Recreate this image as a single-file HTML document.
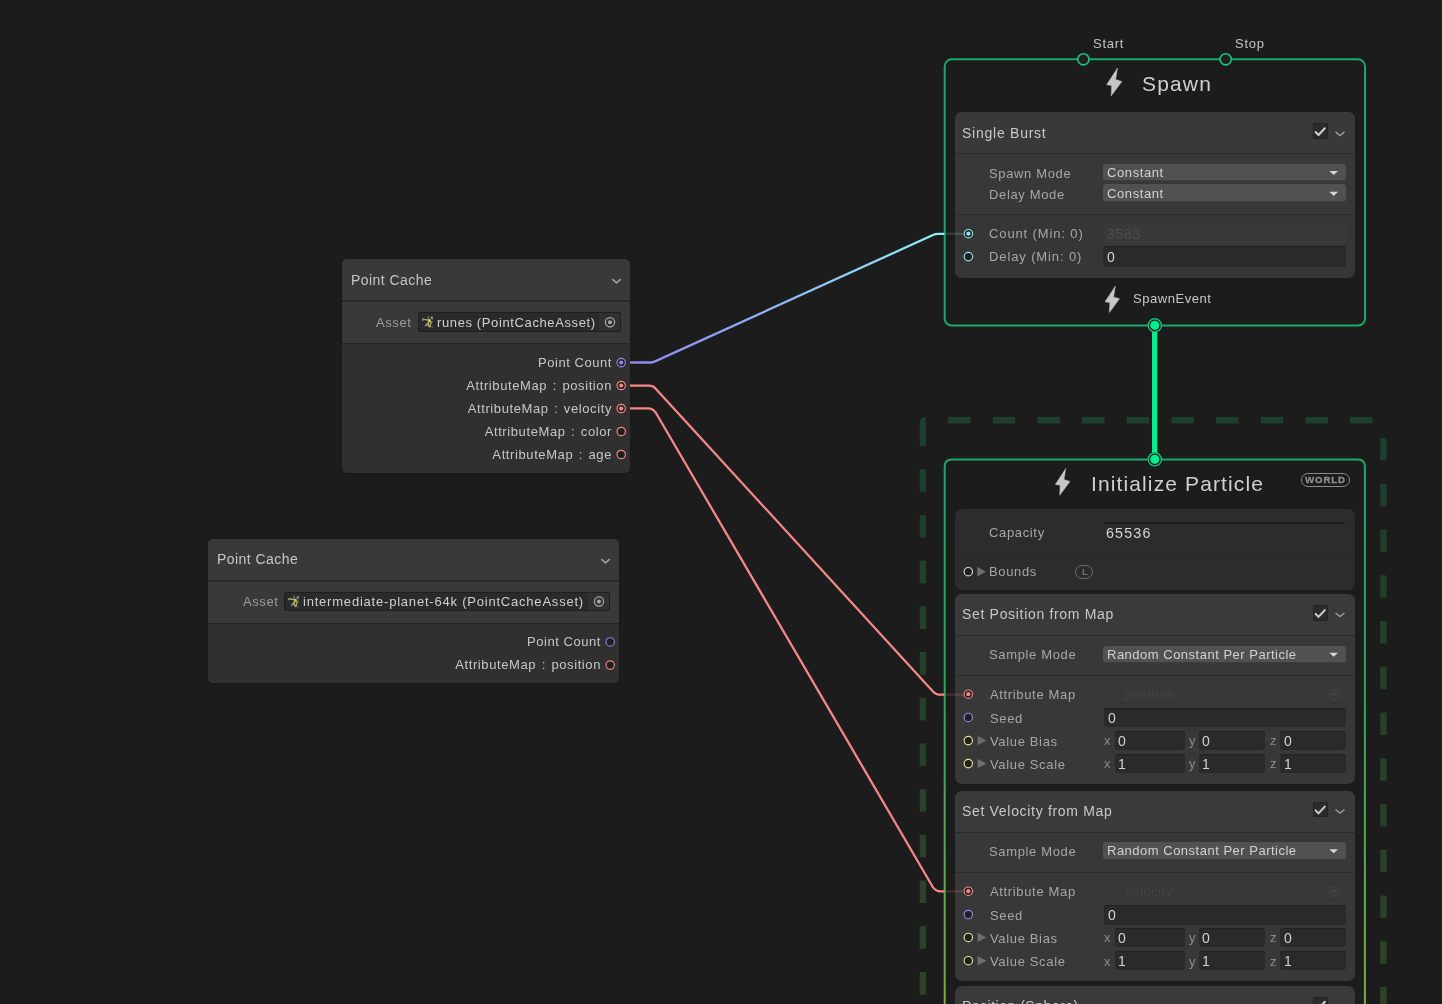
<!DOCTYPE html>
<html><head><meta charset="utf-8"><style>
html,body{margin:0;padding:0;width:1442px;height:1004px;overflow:hidden;background:#1c1c1c;}
.t{position:absolute;white-space:pre;font-family:"Liberation Sans", sans-serif;will-change:transform;}
.r{position:absolute;box-sizing:border-box;}
svg{position:absolute;left:0;top:0;}
</style></head><body>
<svg width="1442" height="1004" viewBox="0 0 1442 1004"><rect x="948.10" y="417" width="22.5" height="6.5" fill="#1d3f2d"/><rect x="992.76" y="417" width="22.5" height="6.5" fill="#1d3f2d"/><rect x="1037.42" y="417" width="22.5" height="6.5" fill="#1d3f2d"/><rect x="1082.08" y="417" width="22.5" height="6.5" fill="#1d3f2d"/><rect x="1126.74" y="417" width="22.5" height="6.5" fill="#1d3f2d"/><rect x="1171.40" y="417" width="22.5" height="6.5" fill="#1d3f2d"/><rect x="1216.06" y="417" width="22.5" height="6.5" fill="#1d3f2d"/><rect x="1260.72" y="417" width="22.5" height="6.5" fill="#1d3f2d"/><rect x="1305.38" y="417" width="22.5" height="6.5" fill="#1d3f2d"/><rect x="1350.04" y="417" width="22.5" height="6.5" fill="#1d3f2d"/><path d="M919.7,445.8 V423 Q919.7,417 925.9,417 V445.8 Z" fill="#1d3f2d"/><rect x="919.7" y="469.30" width="6.3" height="22.6" fill="#1d3f2d"/><rect x="919.7" y="514.99" width="6.3" height="22.6" fill="#1f3f2d"/><rect x="919.7" y="560.68" width="6.3" height="22.6" fill="#20402c"/><rect x="919.7" y="606.37" width="6.3" height="22.6" fill="#22402c"/><rect x="919.7" y="652.06" width="6.3" height="22.6" fill="#23402c"/><rect x="919.7" y="697.75" width="6.3" height="22.6" fill="#25402b"/><rect x="919.7" y="743.44" width="6.3" height="22.6" fill="#26412b"/><rect x="919.7" y="789.13" width="6.3" height="22.6" fill="#28412b"/><rect x="919.7" y="834.82" width="6.3" height="22.6" fill="#29412a"/><rect x="919.7" y="880.51" width="6.3" height="22.6" fill="#2b412a"/><rect x="919.7" y="926.20" width="6.3" height="22.6" fill="#2c422a"/><rect x="919.7" y="971.89" width="6.3" height="22.6" fill="#2e4229"/><rect x="1380.2" y="438.10" width="6.4" height="22.4" fill="#1d3f2d"/><rect x="1380.2" y="483.84" width="6.4" height="22.4" fill="#1e3f2d"/><rect x="1380.2" y="529.58" width="6.4" height="22.4" fill="#1f3f2c"/><rect x="1380.2" y="575.32" width="6.4" height="22.4" fill="#21402c"/><rect x="1380.2" y="621.06" width="6.4" height="22.4" fill="#22402c"/><rect x="1380.2" y="666.80" width="6.4" height="22.4" fill="#24402b"/><rect x="1380.2" y="712.54" width="6.4" height="22.4" fill="#25402b"/><rect x="1380.2" y="758.28" width="6.4" height="22.4" fill="#27412b"/><rect x="1380.2" y="804.02" width="6.4" height="22.4" fill="#28412a"/><rect x="1380.2" y="849.76" width="6.4" height="22.4" fill="#2a412a"/><rect x="1380.2" y="895.50" width="6.4" height="22.4" fill="#2b412a"/><rect x="1380.2" y="941.24" width="6.4" height="22.4" fill="#2d4229"/><rect x="1380.2" y="986.98" width="6.4" height="22.4" fill="#2e4229"/><rect x="944.7" y="59.3" width="420.3" height="266.2" rx="7" fill="#1c1c1c" stroke="#18a86a" stroke-width="2"/><defs><linearGradient id="ig" x1="0" y1="459" x2="0" y2="1004" gradientUnits="userSpaceOnUse"><stop offset="0" stop-color="#18a86a"/><stop offset="0.45" stop-color="#2aa85e"/><stop offset="1" stop-color="#80aa3e"/></linearGradient></defs><path d="M944.7,1010 V466.4 Q944.7,459.4 951.7,459.4 H1357.9 Q1364.9,459.4 1364.9,466.4 V1010" fill="#1c1c1c" stroke="url(#ig)" stroke-width="2"/></svg>
<div class="r" style="left:341px;top:258px;width:290px;height:216px;background:#191919;border-radius:6px;"></div><div class="r" style="left:342px;top:259px;width:288px;height:214px;background:#303030;border-radius:5px;overflow:hidden;"></div><div class="r" style="left:342px;top:259px;width:288px;height:41px;background:#393939;border-radius:5px 5px 0 0;"></div><div class="r" style="left:342px;top:300px;width:288px;height:2px;background:#2b2b2b;"></div><div class="r" style="left:342px;top:302px;width:288px;height:41px;background:#393939;"></div><div class="r" style="left:342px;top:343px;width:288px;height:1px;background:#262626;"></div><div class="r" style="left:342px;top:344px;width:288px;height:1px;background:#2b2b2b;"></div><div class="t" style="left:351.30px;top:273.15px;font-size:14px;line-height:14px;color:#c6c6c6;letter-spacing:0.45px;font-weight:normal;">Point Cache</div><div class="t" style="left:376.00px;top:315.50px;font-size:13px;line-height:13px;color:#9c9c9c;letter-spacing:0.6px;font-weight:normal;">Asset</div><div class="r" style="left:418px;top:312px;width:203px;height:20.399999999999977px;background:#2a2a2a;border-radius:3px;box-shadow:inset 0 0 0 1px #1f1f1f;"></div><div class="r" style="left:599px;top:313px;width:21px;height:18.399999999999977px;background:#313131;border-radius:0 2px 2px 0;"></div><div class="t" style="left:437.00px;top:315.50px;font-size:13px;line-height:13px;color:#d0d0d0;letter-spacing:0.62px;font-weight:normal;">runes (PointCacheAsset)</div><div class="t" style="left:-87.95px;width:700px;text-align:right;top:356.30px;font-size:13px;line-height:13px;color:#c6c6c6;letter-spacing:0.55px;font-weight:normal;">Point Count</div><div class="t" style="left:-87.90px;width:700px;text-align:right;top:378.90px;font-size:13px;line-height:13px;color:#c6c6c6;letter-spacing:0.6px;font-weight:normal;word-spacing:1.3px;">AttributeMap : position</div><div class="t" style="left:-87.90px;width:700px;text-align:right;top:401.90px;font-size:13px;line-height:13px;color:#c6c6c6;letter-spacing:0.6px;font-weight:normal;word-spacing:1.3px;">AttributeMap : velocity</div><div class="t" style="left:-87.90px;width:700px;text-align:right;top:424.90px;font-size:13px;line-height:13px;color:#c6c6c6;letter-spacing:0.6px;font-weight:normal;word-spacing:1.3px;">AttributeMap : color</div><div class="t" style="left:-87.90px;width:700px;text-align:right;top:447.90px;font-size:13px;line-height:13px;color:#c6c6c6;letter-spacing:0.6px;font-weight:normal;word-spacing:1.3px;">AttributeMap : age</div><div class="r" style="left:207px;top:538px;width:413px;height:146px;background:#191919;border-radius:6px;"></div><div class="r" style="left:208px;top:539px;width:411px;height:144px;background:#303030;border-radius:5px;overflow:hidden;"></div><div class="r" style="left:208px;top:539px;width:411px;height:41px;background:#393939;border-radius:5px 5px 0 0;"></div><div class="r" style="left:208px;top:580px;width:411px;height:2px;background:#2b2b2b;"></div><div class="r" style="left:208px;top:582px;width:411px;height:41px;background:#393939;"></div><div class="r" style="left:208px;top:623px;width:411px;height:1px;background:#262626;"></div><div class="r" style="left:208px;top:624px;width:411px;height:1px;background:#2b2b2b;"></div><div class="t" style="left:217.30px;top:552.15px;font-size:14px;line-height:14px;color:#c6c6c6;letter-spacing:0.45px;font-weight:normal;">Point Cache</div><div class="t" style="left:243.30px;top:595.00px;font-size:13px;line-height:13px;color:#9c9c9c;letter-spacing:0.6px;font-weight:normal;">Asset</div><div class="r" style="left:284px;top:591.6px;width:326px;height:19.899999999999977px;background:#2a2a2a;border-radius:3px;box-shadow:inset 0 0 0 1px #1f1f1f;"></div><div class="r" style="left:588px;top:592.6px;width:21px;height:17.899999999999977px;background:#313131;border-radius:0 2px 2px 0;"></div><div class="t" style="left:303.00px;top:595.00px;font-size:13px;line-height:13px;color:#d0d0d0;letter-spacing:0.79px;font-weight:normal;">intermediate-planet-64k (PointCacheAsset)</div><div class="t" style="left:-98.95px;width:700px;text-align:right;top:634.90px;font-size:13px;line-height:13px;color:#c6c6c6;letter-spacing:0.55px;font-weight:normal;">Point Count</div><div class="t" style="left:-98.90px;width:700px;text-align:right;top:658.00px;font-size:13px;line-height:13px;color:#c6c6c6;letter-spacing:0.6px;font-weight:normal;word-spacing:1.3px;">AttributeMap : position</div><div class="t" style="left:1093.30px;top:36.90px;font-size:13px;line-height:13px;color:#c4c4c4;letter-spacing:0.75px;font-weight:normal;">Start</div><div class="t" style="left:1234.90px;top:37.00px;font-size:13px;line-height:13px;color:#c4c4c4;letter-spacing:0.75px;font-weight:normal;">Stop</div><div class="t" style="left:1142.00px;top:73.32px;font-size:21px;line-height:21px;color:#d0d0d0;letter-spacing:1.15px;font-weight:normal;">Spawn</div><div class="r" style="left:955px;top:112px;width:400px;height:165.5px;background:#363636;border-radius:7px;"></div><div class="r" style="left:955px;top:112px;width:400px;height:41px;background:#393939;border-radius:7px 7px 0 0;"></div><div class="r" style="left:955px;top:153px;width:400px;height:1px;background:#2a2a2a;"></div><div class="r" style="left:955px;top:154px;width:400px;height:60px;background:#383838;"></div><div class="r" style="left:955px;top:214px;width:400px;height:1px;background:#2c2c2c;"></div><div class="t" style="left:962.00px;top:125.65px;font-size:14px;line-height:14px;color:#c8c8c8;letter-spacing:0.75px;font-weight:normal;">Single Burst</div><div class="r" style="left:1312.5px;top:123.2px;width:15.0px;height:15.499999999999986px;background:#2b2b2b;border-radius:2px;box-shadow:inset 0 0 0 1px #232323;"></div><div class="t" style="left:989.00px;top:166.80px;font-size:13px;line-height:13px;color:#a6a6a6;letter-spacing:0.65px;font-weight:normal;">Spawn Mode</div><div class="t" style="left:989.00px;top:187.80px;font-size:13px;line-height:13px;color:#a6a6a6;letter-spacing:0.65px;font-weight:normal;">Delay Mode</div><div class="r" style="left:1103px;top:164px;width:242.70000000000005px;height:17px;background:#515151;border-radius:3px;box-shadow:inset 0 -1px 0 #3e3e3e;"></div><div class="t" style="left:1106.50px;top:166.20px;font-size:13px;line-height:13px;color:#d2d2d2;letter-spacing:0.6px;font-weight:normal;">Constant</div><div class="r" style="left:1103px;top:184.4px;width:242.70000000000005px;height:17.799999999999983px;background:#515151;border-radius:3px;box-shadow:inset 0 -1px 0 #3e3e3e;"></div><div class="t" style="left:1106.50px;top:186.60px;font-size:13px;line-height:13px;color:#d2d2d2;letter-spacing:0.6px;font-weight:normal;">Constant</div><div class="t" style="left:989.00px;top:227.20px;font-size:13px;line-height:13px;color:#a6a6a6;letter-spacing:0.88px;font-weight:normal;">Count (Min: 0)</div><div class="t" style="left:989.00px;top:250.20px;font-size:13px;line-height:13px;color:#a6a6a6;letter-spacing:0.88px;font-weight:normal;">Delay (Min: 0)</div><div class="r" style="left:1103px;top:223.5px;width:242.70000000000005px;height:19.5px;background:#393939;border-radius:3px;"></div><div class="t" style="left:1106.50px;top:227.15px;font-size:14px;line-height:14px;color:#4e4e4e;letter-spacing:0.6px;font-weight:normal;">3583</div><div class="r" style="left:1103px;top:246.3px;width:242.70000000000005px;height:20.399999999999977px;background:#2a2a2a;border-radius:3px;box-shadow:inset 0 1px 0 #212121;"></div><div class="t" style="left:1106.50px;top:250.15px;font-size:14px;line-height:14px;color:#d2d2d2;letter-spacing:0.6px;font-weight:normal;">0</div><div class="t" style="left:1132.60px;top:292.40px;font-size:13px;line-height:13px;color:#c8c8c8;letter-spacing:0.55px;font-weight:normal;">SpawnEvent</div><div class="t" style="left:1090.50px;top:473.22px;font-size:21px;line-height:21px;color:#d0d0d0;letter-spacing:1.12px;font-weight:normal;">Initialize Particle</div><div class="r" style="left:1300.8px;top:472.9px;width:49.3px;height:13.9px;border:1.4px solid #8a8a8a;border-radius:8px;"></div><div class="t" style="left:1305.40px;top:474.89px;font-size:9.7px;line-height:9.7px;color:#8e8e8e;letter-spacing:0.85px;font-weight:bold;-webkit-text-stroke:0.3px #8e8e8e;">WORLD</div><div class="r" style="left:955px;top:509px;width:400px;height:80.79999999999995px;background:#2c2c2c;border-radius:7px;"></div><div class="r" style="left:955px;top:552.5px;width:400px;height:1.0px;background:#262626;"></div><div class="t" style="left:989.00px;top:526.00px;font-size:13px;line-height:13px;color:#a6a6a6;letter-spacing:0.65px;font-weight:normal;">Capacity</div><div class="r" style="left:1103.7px;top:522px;width:241.79999999999995px;height:1.6000000000000227px;background:#1d1d1d;"></div><div class="t" style="left:1106.00px;top:526.00px;font-size:14.3px;line-height:14.3px;color:#d4d4d4;letter-spacing:1.15px;font-weight:normal;">65536</div><div class="t" style="left:989.00px;top:564.80px;font-size:13px;line-height:13px;color:#a6a6a6;letter-spacing:0.65px;font-weight:normal;">Bounds</div><div class="r" style="left:1074.9px;top:565px;width:18.6px;height:14px;border:1.2px solid #6a6a6a;border-radius:8px;"></div><div class="t" style="left:1081.60px;top:566.96px;font-size:9.5px;line-height:9.5px;color:#727272;letter-spacing:0.0px;font-weight:bold;">L</div><div class="r" style="left:955px;top:594px;width:400px;height:190.20000000000005px;background:#383838;border-radius:7px;"></div><div class="r" style="left:955px;top:594px;width:400px;height:41.39999999999998px;background:#3a3a3a;border-radius:7px 7px 0 0;"></div><div class="r" style="left:955px;top:635.4px;width:400px;height:1.0px;background:#2a2a2a;"></div><div class="r" style="left:955px;top:675.2px;width:400px;height:1.0px;background:#2c2c2c;"></div><div class="t" style="left:962.00px;top:607.25px;font-size:14px;line-height:14px;color:#c8c8c8;letter-spacing:0.68px;font-weight:normal;">Set Position from Map</div><div class="r" style="left:1312.5px;top:605.1px;width:15.0px;height:15.5px;background:#2b2b2b;border-radius:2px;box-shadow:inset 0 0 0 1px #232323;"></div><div class="t" style="left:989.00px;top:648.40px;font-size:13px;line-height:13px;color:#a6a6a6;letter-spacing:0.65px;font-weight:normal;">Sample Mode</div><div class="r" style="left:1103.2px;top:645.5px;width:242.5px;height:17.5px;background:#515151;border-radius:3px;box-shadow:inset 0 -1px 0 #3e3e3e;"></div><div class="t" style="left:1106.70px;top:647.70px;font-size:13px;line-height:13px;color:#d2d2d2;letter-spacing:0.5px;font-weight:normal;">Random Constant Per Particle</div><div class="t" style="left:990.00px;top:688.40px;font-size:13px;line-height:13px;color:#a6a6a6;letter-spacing:0.65px;font-weight:normal;">Attribute Map</div><div class="t" style="left:990.00px;top:711.60px;font-size:13px;line-height:13px;color:#a6a6a6;letter-spacing:0.65px;font-weight:normal;">Seed</div><div class="t" style="left:990.00px;top:734.80px;font-size:13px;line-height:13px;color:#a6a6a6;letter-spacing:0.65px;font-weight:normal;">Value Bias</div><div class="t" style="left:990.00px;top:757.80px;font-size:13px;line-height:13px;color:#a6a6a6;letter-spacing:0.65px;font-weight:normal;">Value Scale</div><div class="r" style="left:1104.2px;top:685.2px;width:241.5px;height:18.5px;background:#383838;border-radius:3px;box-shadow:inset 0 0 0 1px #343434;"></div><div class="t" style="left:1124.60px;top:688.40px;font-size:13px;line-height:13px;color:#434343;letter-spacing:0.6px;font-weight:normal;">position</div><div class="r" style="left:1104.2px;top:707.9px;width:241.5px;height:19.5px;background:#2a2a2a;border-radius:3px;box-shadow:inset 0 1px 0 #212121;"></div><div class="t" style="left:1108.30px;top:711.15px;font-size:14px;line-height:14px;color:#d2d2d2;letter-spacing:0.6px;font-weight:normal;">0</div><div class="t" style="left:1104.30px;top:734.40px;font-size:13px;line-height:13px;color:#8a8a8a;letter-spacing:0px;font-weight:normal;">x</div><div class="r" style="left:1114.9px;top:731.3000000000001px;width:69.69999999999982px;height:19.09999999999991px;background:#2a2a2a;border-radius:3px;box-shadow:inset 0 1px 0 #212121;"></div><div class="t" style="left:1118.40px;top:734.35px;font-size:14px;line-height:14px;color:#d2d2d2;letter-spacing:0.6px;font-weight:normal;">0</div><div class="t" style="left:1189.20px;top:734.40px;font-size:13px;line-height:13px;color:#8a8a8a;letter-spacing:0px;font-weight:normal;">y</div><div class="r" style="left:1198.7px;top:731.3000000000001px;width:66.09999999999991px;height:19.09999999999991px;background:#2a2a2a;border-radius:3px;box-shadow:inset 0 1px 0 #212121;"></div><div class="t" style="left:1202.20px;top:734.35px;font-size:14px;line-height:14px;color:#d2d2d2;letter-spacing:0.6px;font-weight:normal;">0</div><div class="t" style="left:1270.00px;top:734.40px;font-size:13px;line-height:13px;color:#8a8a8a;letter-spacing:0px;font-weight:normal;">z</div><div class="r" style="left:1280.3px;top:731.3000000000001px;width:65.40000000000009px;height:19.09999999999991px;background:#2a2a2a;border-radius:3px;box-shadow:inset 0 1px 0 #212121;"></div><div class="t" style="left:1283.80px;top:734.35px;font-size:14px;line-height:14px;color:#d2d2d2;letter-spacing:0.6px;font-weight:normal;">0</div><div class="t" style="left:1104.30px;top:757.40px;font-size:13px;line-height:13px;color:#8a8a8a;letter-spacing:0px;font-weight:normal;">x</div><div class="r" style="left:1114.9px;top:754.3000000000001px;width:69.69999999999982px;height:19.09999999999991px;background:#2a2a2a;border-radius:3px;box-shadow:inset 0 1px 0 #212121;"></div><div class="t" style="left:1118.40px;top:757.35px;font-size:14px;line-height:14px;color:#d2d2d2;letter-spacing:0.6px;font-weight:normal;">1</div><div class="t" style="left:1189.20px;top:757.40px;font-size:13px;line-height:13px;color:#8a8a8a;letter-spacing:0px;font-weight:normal;">y</div><div class="r" style="left:1198.7px;top:754.3000000000001px;width:66.09999999999991px;height:19.09999999999991px;background:#2a2a2a;border-radius:3px;box-shadow:inset 0 1px 0 #212121;"></div><div class="t" style="left:1202.20px;top:757.35px;font-size:14px;line-height:14px;color:#d2d2d2;letter-spacing:0.6px;font-weight:normal;">1</div><div class="t" style="left:1270.00px;top:757.40px;font-size:13px;line-height:13px;color:#8a8a8a;letter-spacing:0px;font-weight:normal;">z</div><div class="r" style="left:1280.3px;top:754.3000000000001px;width:65.40000000000009px;height:19.09999999999991px;background:#2a2a2a;border-radius:3px;box-shadow:inset 0 1px 0 #212121;"></div><div class="t" style="left:1283.80px;top:757.35px;font-size:14px;line-height:14px;color:#d2d2d2;letter-spacing:0.6px;font-weight:normal;">1</div><div class="r" style="left:955px;top:790.5px;width:400px;height:190.20000000000005px;background:#383838;border-radius:7px;"></div><div class="r" style="left:955px;top:790.5px;width:400px;height:41.39999999999998px;background:#3a3a3a;border-radius:7px 7px 0 0;"></div><div class="r" style="left:955px;top:831.9px;width:400px;height:1.0px;background:#2a2a2a;"></div><div class="r" style="left:955px;top:871.7px;width:400px;height:1.0px;background:#2c2c2c;"></div><div class="t" style="left:962.00px;top:803.75px;font-size:14px;line-height:14px;color:#c8c8c8;letter-spacing:0.68px;font-weight:normal;">Set Velocity from Map</div><div class="r" style="left:1312.5px;top:801.6px;width:15.0px;height:15.5px;background:#2b2b2b;border-radius:2px;box-shadow:inset 0 0 0 1px #232323;"></div><div class="t" style="left:989.00px;top:844.90px;font-size:13px;line-height:13px;color:#a6a6a6;letter-spacing:0.65px;font-weight:normal;">Sample Mode</div><div class="r" style="left:1103.2px;top:842.0px;width:242.5px;height:17.5px;background:#515151;border-radius:3px;box-shadow:inset 0 -1px 0 #3e3e3e;"></div><div class="t" style="left:1106.70px;top:844.20px;font-size:13px;line-height:13px;color:#d2d2d2;letter-spacing:0.5px;font-weight:normal;">Random Constant Per Particle</div><div class="t" style="left:990.00px;top:885.40px;font-size:13px;line-height:13px;color:#a6a6a6;letter-spacing:0.65px;font-weight:normal;">Attribute Map</div><div class="t" style="left:990.00px;top:908.70px;font-size:13px;line-height:13px;color:#a6a6a6;letter-spacing:0.65px;font-weight:normal;">Seed</div><div class="t" style="left:990.00px;top:931.60px;font-size:13px;line-height:13px;color:#a6a6a6;letter-spacing:0.65px;font-weight:normal;">Value Bias</div><div class="t" style="left:990.00px;top:954.90px;font-size:13px;line-height:13px;color:#a6a6a6;letter-spacing:0.65px;font-weight:normal;">Value Scale</div><div class="r" style="left:1104.2px;top:882.2px;width:241.5px;height:18.5px;background:#383838;border-radius:3px;box-shadow:inset 0 0 0 1px #343434;"></div><div class="t" style="left:1124.60px;top:885.40px;font-size:13px;line-height:13px;color:#434343;letter-spacing:0.6px;font-weight:normal;">velocity</div><div class="r" style="left:1104.2px;top:905.0px;width:241.5px;height:19.5px;background:#2a2a2a;border-radius:3px;box-shadow:inset 0 1px 0 #212121;"></div><div class="t" style="left:1108.30px;top:908.25px;font-size:14px;line-height:14px;color:#d2d2d2;letter-spacing:0.6px;font-weight:normal;">0</div><div class="t" style="left:1104.30px;top:931.20px;font-size:13px;line-height:13px;color:#8a8a8a;letter-spacing:0px;font-weight:normal;">x</div><div class="r" style="left:1114.9px;top:928.1px;width:69.69999999999982px;height:19.09999999999991px;background:#2a2a2a;border-radius:3px;box-shadow:inset 0 1px 0 #212121;"></div><div class="t" style="left:1118.40px;top:931.15px;font-size:14px;line-height:14px;color:#d2d2d2;letter-spacing:0.6px;font-weight:normal;">0</div><div class="t" style="left:1189.20px;top:931.20px;font-size:13px;line-height:13px;color:#8a8a8a;letter-spacing:0px;font-weight:normal;">y</div><div class="r" style="left:1198.7px;top:928.1px;width:66.09999999999991px;height:19.09999999999991px;background:#2a2a2a;border-radius:3px;box-shadow:inset 0 1px 0 #212121;"></div><div class="t" style="left:1202.20px;top:931.15px;font-size:14px;line-height:14px;color:#d2d2d2;letter-spacing:0.6px;font-weight:normal;">0</div><div class="t" style="left:1270.00px;top:931.20px;font-size:13px;line-height:13px;color:#8a8a8a;letter-spacing:0px;font-weight:normal;">z</div><div class="r" style="left:1280.3px;top:928.1px;width:65.40000000000009px;height:19.09999999999991px;background:#2a2a2a;border-radius:3px;box-shadow:inset 0 1px 0 #212121;"></div><div class="t" style="left:1283.80px;top:931.15px;font-size:14px;line-height:14px;color:#d2d2d2;letter-spacing:0.6px;font-weight:normal;">0</div><div class="t" style="left:1104.30px;top:954.50px;font-size:13px;line-height:13px;color:#8a8a8a;letter-spacing:0px;font-weight:normal;">x</div><div class="r" style="left:1114.9px;top:951.4000000000001px;width:69.69999999999982px;height:19.09999999999991px;background:#2a2a2a;border-radius:3px;box-shadow:inset 0 1px 0 #212121;"></div><div class="t" style="left:1118.40px;top:954.45px;font-size:14px;line-height:14px;color:#d2d2d2;letter-spacing:0.6px;font-weight:normal;">1</div><div class="t" style="left:1189.20px;top:954.50px;font-size:13px;line-height:13px;color:#8a8a8a;letter-spacing:0px;font-weight:normal;">y</div><div class="r" style="left:1198.7px;top:951.4000000000001px;width:66.09999999999991px;height:19.09999999999991px;background:#2a2a2a;border-radius:3px;box-shadow:inset 0 1px 0 #212121;"></div><div class="t" style="left:1202.20px;top:954.45px;font-size:14px;line-height:14px;color:#d2d2d2;letter-spacing:0.6px;font-weight:normal;">1</div><div class="t" style="left:1270.00px;top:954.50px;font-size:13px;line-height:13px;color:#8a8a8a;letter-spacing:0px;font-weight:normal;">z</div><div class="r" style="left:1280.3px;top:951.4000000000001px;width:65.40000000000009px;height:19.09999999999991px;background:#2a2a2a;border-radius:3px;box-shadow:inset 0 1px 0 #212121;"></div><div class="t" style="left:1283.80px;top:954.45px;font-size:14px;line-height:14px;color:#d2d2d2;letter-spacing:0.6px;font-weight:normal;">1</div><div class="r" style="left:955px;top:985.6px;width:400px;height:44.39999999999998px;background:#3a3a3a;border-radius:7px;"></div><div class="t" style="left:962.00px;top:998.85px;font-size:14px;line-height:14px;color:#c8c8c8;letter-spacing:0.5px;font-weight:normal;">Position (Sphere)</div><div class="r" style="left:1312.5px;top:996.7px;width:15.0px;height:15.5px;background:#2b2b2b;border-radius:2px;box-shadow:inset 0 0 0 1px #232323;"></div>
<svg width="1442" height="1004" viewBox="0 0 1442 1004"><polyline points="612.3,279.1 616.5,282.9 620.7,279.1" fill="none" stroke="#a0a0a0" stroke-width="1.6"/><g opacity="1.0"><circle cx="610.0" cy="322.2" r="4.6" fill="none" stroke="#a8a8a8" stroke-width="1.2"/><circle cx="610.0" cy="322.2" r="2" fill="#a8a8a8"/></g><g transform="translate(418.9,313)" fill="none" stroke-linecap="round" stroke-linejoin="round"><polyline points="5.4,6.4 10.6,7.3 12.4,9.3 10.8,13.4 9,12.2 10.4,7.6" stroke="#b8b43c" stroke-width="1.3"/><polyline points="10.4,7.6 8.1,11.1 6.5,12.8" stroke="#a8a878" stroke-width="1.3"/><line x1="9.3" y1="3.5" x2="9.3" y2="6" stroke="#8a9aa0" stroke-width="0.9"/><circle cx="10.6" cy="7.4" r="1.3" fill="#cccc44" stroke="none"/><circle cx="4.2" cy="6.5" r="1.2" fill="#8a8a96" stroke="none"/><circle cx="12.9" cy="4.8" r="1.2" fill="#a09a9a" stroke="none"/><circle cx="10.8" cy="13.5" r="1.1" fill="#c0aa80" stroke="none"/><circle cx="13.5" cy="6.2" r="0.8" fill="#3a70a0" stroke="none"/><circle cx="13.4" cy="8.7" r="0.8" fill="#3a70a0" stroke="none"/><circle cx="13.3" cy="14" r="0.9" fill="#2f5f90" stroke="none"/><circle cx="6.3" cy="13.3" r="0.8" fill="#2f5f90" stroke="none"/></g><circle cx="621.2" cy="362.6" r="4.2" fill="#1f1f1f" stroke="#8f85ee" stroke-width="1.15"/><circle cx="621.2" cy="362.6" r="2.1" fill="#8f85ee"/><circle cx="621.2" cy="385.5" r="4.2" fill="#1f1f1f" stroke="#f38787" stroke-width="1.15"/><circle cx="621.2" cy="385.5" r="2.1" fill="#f38787"/><circle cx="621.2" cy="408.5" r="4.2" fill="#1f1f1f" stroke="#f38787" stroke-width="1.15"/><circle cx="621.2" cy="408.5" r="2.1" fill="#f38787"/><circle cx="621.2" cy="431.5" r="4.2" fill="#1f1f1f" stroke="#f38787" stroke-width="1.15"/><circle cx="621.2" cy="454.5" r="4.2" fill="#1f1f1f" stroke="#f38787" stroke-width="1.15"/><polyline points="601.3,559.1 605.5,562.9 609.7,559.1" fill="none" stroke="#a0a0a0" stroke-width="1.6"/><g opacity="1.0"><circle cx="599.0" cy="601.55" r="4.6" fill="none" stroke="#a8a8a8" stroke-width="1.2"/><circle cx="599.0" cy="601.55" r="2" fill="#a8a8a8"/></g><g transform="translate(284.9,592.6)" fill="none" stroke-linecap="round" stroke-linejoin="round"><polyline points="5.4,6.4 10.6,7.3 12.4,9.3 10.8,13.4 9,12.2 10.4,7.6" stroke="#b8b43c" stroke-width="1.3"/><polyline points="10.4,7.6 8.1,11.1 6.5,12.8" stroke="#a8a878" stroke-width="1.3"/><line x1="9.3" y1="3.5" x2="9.3" y2="6" stroke="#8a9aa0" stroke-width="0.9"/><circle cx="10.6" cy="7.4" r="1.3" fill="#cccc44" stroke="none"/><circle cx="4.2" cy="6.5" r="1.2" fill="#8a8a96" stroke="none"/><circle cx="12.9" cy="4.8" r="1.2" fill="#a09a9a" stroke="none"/><circle cx="10.8" cy="13.5" r="1.1" fill="#c0aa80" stroke="none"/><circle cx="13.5" cy="6.2" r="0.8" fill="#3a70a0" stroke="none"/><circle cx="13.4" cy="8.7" r="0.8" fill="#3a70a0" stroke="none"/><circle cx="13.3" cy="14" r="0.9" fill="#2f5f90" stroke="none"/><circle cx="6.3" cy="13.3" r="0.8" fill="#2f5f90" stroke="none"/></g><circle cx="610.2" cy="641.9" r="4.2" fill="#1f1f1f" stroke="#8f85ee" stroke-width="1.15"/><circle cx="610.2" cy="665.1" r="4.2" fill="#1f1f1f" stroke="#f38787" stroke-width="1.15"/><circle cx="1083.4" cy="59.3" r="5.6" fill="#1f1f1f" stroke="#1bc47c" stroke-width="1.6"/><circle cx="1225.7" cy="59.3" r="5.6" fill="#1f1f1f" stroke="#1bc47c" stroke-width="1.6"/><polygon points="1117.50,68.00 1115.70,79.50 1121.90,81.50 1111.20,95.90 1111.60,85.50 1106.60,84.70" fill="#c6c6c6" stroke="#c6c6c6" stroke-width="0.45" stroke-linejoin="round"/><polyline points="1315.6,132.0 1318.5,135.0 1324.8,128.2" fill="none" stroke="#cfcfcf" stroke-width="2" stroke-linecap="round" stroke-linejoin="round"/><polyline points="1335.5,131.89999999999998 1340,135.5 1344.5,131.89999999999998" fill="none" stroke="#9a9a9a" stroke-width="1.5"/><polygon points="1329.4,170.9 1338.0,170.9 1333.7,175.1" fill="#d6d6d6"/><polygon points="1329.4,191.70000000000002 1338.0,191.70000000000002 1333.7,195.9" fill="#d6d6d6"/><polygon points="1115.36,286.00 1113.64,296.93 1119.54,298.82 1109.37,312.50 1109.75,302.62 1105.00,301.87" fill="#c6c6c6" stroke="#c6c6c6" stroke-width="0.45" stroke-linejoin="round"/><polygon points="1065.76,468.50 1064.04,479.54 1069.99,481.46 1059.72,495.28 1060.10,485.30 1055.30,484.53" fill="#c6c6c6" stroke="#c6c6c6" stroke-width="0.45" stroke-linejoin="round"/><circle cx="968.3" cy="571.7" r="4.2" fill="#1f1f1f" stroke="#d8d8d8" stroke-width="1.15"/><polygon points="977.3,566.8 985.9,571.7 977.3,576.6" fill="#6e6e6e"/><polyline points="1315.6,613.9 1318.5,616.9 1324.8,610.1" fill="none" stroke="#cfcfcf" stroke-width="2" stroke-linecap="round" stroke-linejoin="round"/><polyline points="1335.5,613.0 1340,616.5999999999999 1344.5,613.0" fill="none" stroke="#9a9a9a" stroke-width="1.5"/><polygon points="1329.4,652.65 1338.0,652.65 1333.7,656.85" fill="#d6d6d6"/><circle cx="968.3" cy="694.2" r="4.2" fill="#1f1f1f" stroke="#f38787" stroke-width="1.15"/><circle cx="968.3" cy="694.2" r="2.1" fill="#f38787"/><circle cx="968.3" cy="717.4" r="4.2" fill="#1f1f1f" stroke="#8f85ee" stroke-width="1.15"/><circle cx="968.3" cy="740.6" r="4.2" fill="#1f1f1f" stroke="#e3e68a" stroke-width="1.15"/><circle cx="968.3" cy="763.6" r="4.2" fill="#1f1f1f" stroke="#e3e68a" stroke-width="1.15"/><polygon points="977.6,736.0 986.4,740.6 977.6,745.2" fill="#6e6e6e"/><polygon points="977.6,759.0 986.4,763.6 977.6,768.2" fill="#6e6e6e"/><g opacity="1.0"><circle cx="1334" cy="694.2" r="4.6" fill="none" stroke="#444444" stroke-width="1.2"/><circle cx="1334" cy="694.2" r="2" fill="#444444"/></g><polyline points="1315.6,810.4 1318.5,813.4 1324.8,806.6" fill="none" stroke="#cfcfcf" stroke-width="2" stroke-linecap="round" stroke-linejoin="round"/><polyline points="1335.5,809.5 1340,813.0999999999999 1344.5,809.5" fill="none" stroke="#9a9a9a" stroke-width="1.5"/><polygon points="1329.4,849.15 1338.0,849.15 1333.7,853.35" fill="#d6d6d6"/><circle cx="968.3" cy="891.2" r="4.2" fill="#1f1f1f" stroke="#f38787" stroke-width="1.15"/><circle cx="968.3" cy="891.2" r="2.1" fill="#f38787"/><circle cx="968.3" cy="914.5" r="4.2" fill="#1f1f1f" stroke="#8f85ee" stroke-width="1.15"/><circle cx="968.3" cy="937.4" r="4.2" fill="#1f1f1f" stroke="#e3e68a" stroke-width="1.15"/><circle cx="968.3" cy="960.7" r="4.2" fill="#1f1f1f" stroke="#e3e68a" stroke-width="1.15"/><polygon points="977.6,932.8 986.4,937.4 977.6,942.0" fill="#6e6e6e"/><polygon points="977.6,956.1 986.4,960.7 977.6,965.3000000000001" fill="#6e6e6e"/><g opacity="1.0"><circle cx="1334" cy="891.2" r="4.6" fill="none" stroke="#444444" stroke-width="1.2"/><circle cx="1334" cy="891.2" r="2" fill="#444444"/></g><polyline points="1315.6,1005.5 1318.5,1008.5 1324.8,1001.7" fill="none" stroke="#cfcfcf" stroke-width="2" stroke-linecap="round" stroke-linejoin="round"/><defs><linearGradient id="pc" x1="630" y1="0" x2="944" y2="0" gradientUnits="userSpaceOnUse"><stop offset="0" stop-color="#8f85ee"/><stop offset="1" stop-color="#8ef0f8"/></linearGradient></defs><path d="M630,362.5 H650.5 Q652.5,362.5 654.5,361.6 L933.5,234.8 Q935.5,233.8 937.5,233.8 H944" fill="none" stroke="url(#pc)" stroke-width="2.3"/><path d="M944,233.8 H963" fill="none" stroke="#8ef0f8" stroke-opacity="0.17" stroke-width="2.3"/><path d="M630,385.6 H649 Q653,385.6 655.5,388.4 L933,691.5 Q935.8,694.6 939,694.6 H944" fill="none" stroke="#f38787" stroke-width="2.3"/><path d="M944,694.6 H963" fill="none" stroke="#f38787" stroke-opacity="0.17" stroke-width="2.3"/><path d="M630,408.4 H648 Q653,408.4 656,413 L932.5,886.5 Q935.5,891.4 940.5,891.4 H944" fill="none" stroke="#f38787" stroke-width="2.3"/><path d="M944,891.4 H963" fill="none" stroke="#f38787" stroke-opacity="0.17" stroke-width="2.3"/><rect x="1152" y="330" width="5.4" height="125" fill="#00f08c"/><circle cx="1154.8" cy="325.3" r="6.6" fill="#1c1c1c" stroke="#17c078" stroke-width="1.4"/><circle cx="1154.8" cy="325.3" r="4.6" fill="#00f08c"/><circle cx="1154.8" cy="459.3" r="6.6" fill="#1c1c1c" stroke="#17c078" stroke-width="1.4"/><circle cx="1154.8" cy="459.3" r="4.6" fill="#00f08c"/><circle cx="968.4" cy="233.7" r="4.2" fill="#1f1f1f" stroke="#8eeaf2" stroke-width="1.15"/><circle cx="968.4" cy="233.7" r="2.1" fill="#8eeaf2"/><circle cx="968.4" cy="256.6" r="4.2" fill="#1f1f1f" stroke="#8eeaf2" stroke-width="1.15"/></svg>
</body></html>
